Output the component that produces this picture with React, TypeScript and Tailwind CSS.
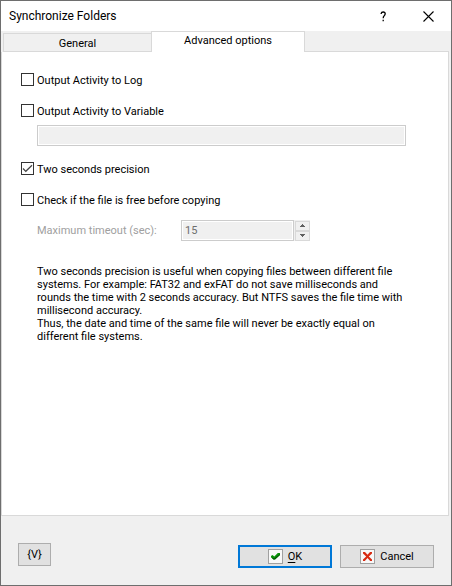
import { useState } from "react";
import type { ReactNode } from "react";

function CheckRow({ label, initial = false }: { label: string; initial?: boolean }) {
  const [checked, setChecked] = useState(initial);
  return (
    <label className="flex h-[13px] items-center gap-[3px]">
      <span className="grid size-[13px] shrink-0">
        <input
          type="checkbox"
          checked={checked}
          onChange={(e) => setChecked(e.target.checked)}
          className="col-start-1 row-start-1 size-[13px] appearance-none border border-[#333] bg-white"
        />
        {checked && (
          <svg viewBox="0 0 13 13" className="pointer-events-none col-start-1 row-start-1 size-[13px]" fill="none" stroke="#444" strokeWidth="1.2">
            <path d="M2 6.5 4.8 9.3 11 3.2" />
          </svg>
        )}
      </span>
      <span className="pt-[2px] leading-[13px] whitespace-nowrap">{label}</span>
    </label>
  );
}

function IconBox({ children }: { children: ReactNode }) {
  return (
    <span className="flex size-[15px] items-center justify-center border border-[#a0a0a0] bg-[#f8f8f8]">
      <svg viewBox="0 0 13 13" className="size-[13px] shrink-0">{children}</svg>
    </span>
  );
}

function SpinButton({ label, path }: { label: string; path: string }) {
  return (
    <button type="button" disabled aria-label={label} className="flex h-[10px] w-[15px] items-center justify-center border border-[#d9d9d9] bg-[#f0f0f0]">
      <svg viewBox="0 0 5 3" className="h-[3px] w-[5px]" fill="#606060">
        <path d={path} />
      </svg>
    </button>
  );
}

export default function App() {
  return (
    <main className="flex min-h-screen flex-col border border-[#6e6e6e] bg-[#f0f0f0] font-['Roboto',sans-serif] text-[11px] text-black">
      <header className="flex h-[30px] shrink-0 items-center bg-white pl-2">
        <h1 className="flex-1 text-[12px] leading-[16px]">Synchronize Folders</h1>
        <button type="button" aria-label="Help" className="flex h-[30px] w-[45px] items-center justify-center">
          <svg viewBox="0 0 7 11" className="h-[11px] w-[7px]" fill="none" stroke="#000" strokeWidth="1.3">
            <path d="M1.2 3V2.4Q1.4 1 3.2 1 5.2 1 5.2 2.8 5.2 3.8 4.2 4.7 3.2 5.5 3.2 7.2M3.2 8.8v1.5" />
          </svg>
        </button>
        <button type="button" aria-label="Close" className="flex h-[30px] w-[45px] items-center justify-center">
          <svg viewBox="0 0 11 11" className="h-[11px] w-[11px]" fill="none" stroke="#000" strokeWidth="1.1">
            <path d="m.5.5 10 10M10.5.5l-10 10" />
          </svg>
        </button>
      </header>

      <div role="tablist" className="flex h-[21px] shrink-0 items-end pr-[2px]">
        <button type="button" role="tab" aria-selected="false" className="ml-[2px] h-[19px] w-[148px] border border-r-0 border-[#d9d9d9] bg-[#f0f0f0] pt-[2px] leading-[15px]">
          General
        </button>
        <button type="button" role="tab" aria-selected="true" className="h-[21px] w-[154px] border border-b-0 border-[#d9d9d9] bg-white pb-[2px] leading-[18px]">
          Advanced options
        </button>
        <div className="h-px flex-1 bg-[#d9d9d9]" />
      </div>

      <section role="tabpanel" className="mr-[2px] flex-1 border border-t-0 border-[#d9d9d9] bg-white pt-[21px] pr-[42px] pl-[19px]">
        <CheckRow label="Output Activity to Log" />
        <div className="mt-[18px]">
          <CheckRow label="Output Activity to Variable" />
        </div>
        <input
          type="text"
          disabled
          aria-label="Variable"
          className="mt-2 ml-4 block h-[21px] w-[calc(100%-16px)] border border-[#ccc] bg-[#f0f0f0] shadow-[inset_0_0_0_1px_#fff]"
        />
        <div className="mt-4">
          <CheckRow label="Two seconds precision" initial />
        </div>
        <div className="mt-[18px]">
          <CheckRow label="Check if the file is free before copying" />
        </div>
        <div className="mt-[14px] ml-4 flex items-center">
          <label htmlFor="timeout" className="w-[144px] leading-[13px] text-[#a0a0a0]">Maximum timeout (sec):</label>
          <input
            id="timeout"
            type="text"
            disabled
            defaultValue="15"
            className="h-[21px] w-[113px] border border-[#ccc] bg-[#f0f0f0] px-[3px] text-[#6d6d6d] shadow-[inset_0_0_0_1px_#fff]"
          />
          <div className="flex h-[21px] w-[16px] flex-col items-center justify-center bg-[#f0f0f0]">
            <SpinButton label="Increase" path="M2 0h1v1h1v1h1v1H0V2h1V1h1z" />
            <SpinButton label="Decrease" path="M0 0h5v1H4v1H3v1H2V2H1V1H0z" />
          </div>
        </div>
        <p className="mt-6 ml-4 leading-[13px]">
          Two seconds precision is useful when copying files between different file<br />
          systems. For example: FAT32 and exFAT do not save milliseconds and<br />
          rounds the time with 2 seconds accuracy. But NTFS saves the file time with<br />
          millisecond accuracy.<br />
          Thus, the date and time of the same file will never be exactly equal on<br />
          different file systems.
        </p>
      </section>

      <footer className="flex h-[69px] shrink-0 items-start gap-2 px-[17px] pt-[29px]">
        <button type="button" className="-mt-[2px] mr-auto h-[23px] w-[33px] border border-[#adadad] bg-[#e1e1e1] pt-[2px]">{"{V}"}</button>
        <button type="button" className="flex h-[23px] w-[94px] items-center justify-center gap-[5px] border-2 border-[#0078d7] bg-[#e1e1e1]">
          <IconBox>
            <path d="M2 6 3.5 5 5.3 6.5 8.8 3H11V5L6 9.5H4.5L2 7.3z" fill="#0a940a" />
            <path d="M2.2 7.2 4.5 9.5H6L11 5v-1L5.3 8.2z" fill="#045a04" />
          </IconBox>
          <span className="pt-[2px]"><span className="underline underline-offset-2">O</span>K</span>
        </button>
        <button type="button" className="flex h-[23px] w-[94px] items-center justify-center gap-[5px] border border-[#adadad] bg-[#e1e1e1]">
          <IconBox>
            <path d="M2 2H4L6.5 4.8 9 2H11V3.4L7.8 6.5 11 9.6V11H9.2L6.5 8 3.8 11H2V9.6L5.2 6.5 2 3.4z" fill="#d82a12" />
          </IconBox>
          <span className="pt-[2px]">Cancel</span>
        </button>
      </footer>
    </main>
  );
}
